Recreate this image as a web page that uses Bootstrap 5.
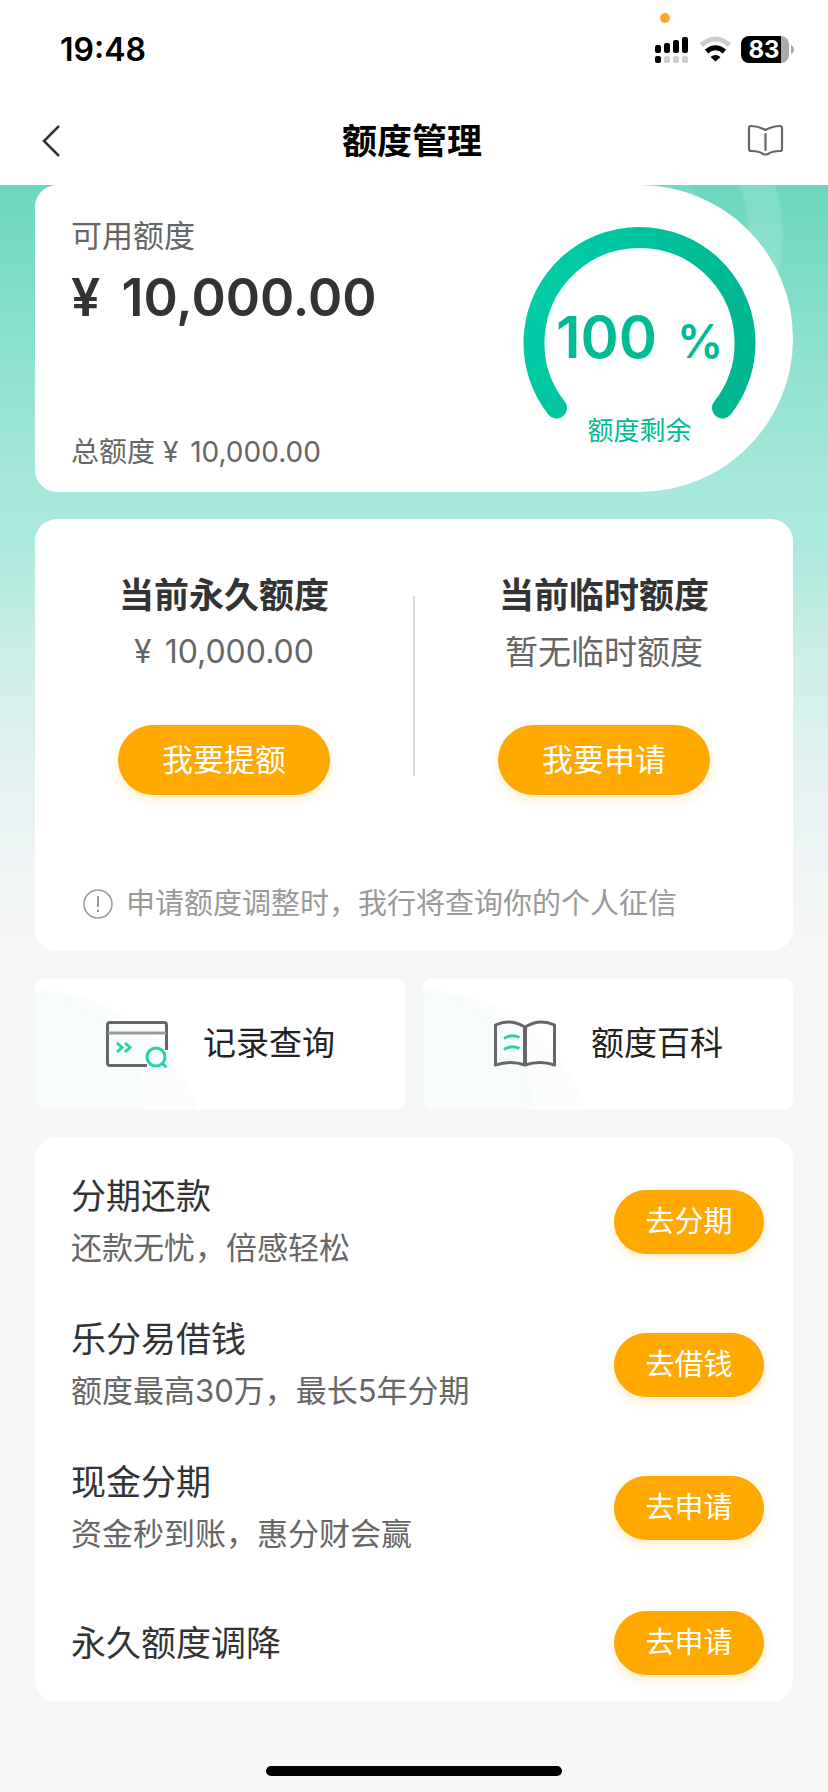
<!DOCTYPE html>
<html lang="zh-CN">
<head>
<meta charset="utf-8">
<meta name="viewport" content="width=device-width, initial-scale=1">
<title>额度管理</title>
<link href="https://cdn.jsdelivr.net/npm/bootstrap@5.3.0/dist/css/bootstrap.min.css" rel="stylesheet">
<style>
  :root { --ink: #333; --ink-soft: #666; --brand: #00bb94; --accent: #ffa900; }
  body { font-family: "Inter", "Noto Sans CJK SC", sans-serif; color: var(--ink); background: #f6f6f6; }
  .status-bar { height: 100px; padding: 0 34px 0 60px; }
  .clock { font-size: 32px; line-height: 40px; font-weight: 600; color: #000; }
  .mic-dot { position: absolute; top: 13px; right: 158px; width: 10px; height: 10px; background: #ffa52e; }
  .title-bar { height: 85px; padding: 0 44px 4px 40px; }
  .title-bar h1 { font-size: 35px; line-height: 52px; font-weight: 700; color: #000; }
  .title-bar .btn { line-height: 0; }
  .page-body {
    gap: 27px; padding: 0 35px 64px;
    background:
      radial-gradient(circle at calc(100% - 213px) 50px, rgba(255,255,255,.06) 90px, transparent 91px, transparent 133px, rgba(255,255,255,.13) 134px, rgba(255,255,255,.13) 167px, transparent 168px) 0 0 / 100% 300px no-repeat,
      linear-gradient(#6cd7bf 0, #a8e8dc 307px, #abe9dd 360px, #cceee6 465px, #e5f2f1 600px, #f0f4f5 690px, #f6f6f6 770px) 0 0 / 100% 770px no-repeat;
  }
  .panel { background: #fff; border-radius: 22px; }
  .quota { border-radius: 22px 154px 154px 22px; height: 307px; }
  .quota-info { padding: 31px 0 20px 36px; }
  .label-md { font-size: 31px; line-height: 40px; color: var(--ink-soft); }
  .label-sm { font-size: 28px; line-height: 40px; color: var(--ink-soft); }
  .quota-value { font-size: 52px; line-height: 66px; font-weight: 600; margin-top: 9px; }
  .gauge { width: 307px; color: var(--brand); padding-top: 112px; }
  .gauge svg { position: absolute; inset: 0; }
  .gauge-value { font-size: 58px; line-height: 80px; font-weight: 600; }
  .gauge-value small { font-size: 46px; margin-left: 20px; }
  .gauge-label { font-size: 26px; line-height: 40px; margin-top: 30px; }
  .limits { padding: 48px 0 25px; }
  .limits h2 { font-size: 35px; line-height: 56px; font-weight: 700; }
  .limit-value { font-size: 33px; line-height: 58px; color: var(--ink-soft); margin-bottom: 44px; }
  .limit-amount { font-size: 32px; }
  .divider { width: 2px; height: 180px; margin-top: 29px; background: #d8d8d8; }
  .btn-accent {
    --bs-btn-color: #fff; --bs-btn-bg: var(--accent); --bs-btn-border-color: var(--accent);
    --bs-btn-hover-color: #fff; --bs-btn-hover-bg: #f29f00; --bs-btn-hover-border-color: #f29f00;
    --bs-btn-padding-y: 0; --bs-btn-padding-x: 0;
    box-shadow: 0 5px 12px rgba(255,169,0,.2);
  }
  .btn-wide { width: 212px; height: 70px; font-size: 31px; }
  .btn-row { width: 150px; height: 64px; font-size: 29px; }
  .notice { padding-left: 48px; margin-top: 86px; gap: 13px; font-size: 29px; line-height: 45px; color: #999; }
  .tiles { gap: 18px; }
  .tile {
    flex: 1 1 0; height: 132px; gap: 34px; border-radius: 11px; font-size: 33px; color: #222; text-decoration: none;
    background:
      radial-gradient(circle at 0 122px, rgba(240,250,250,.3) 0, rgba(240,250,250,.4) 108px, transparent 109px),
      radial-gradient(circle at -5px 188px, #fafcfd 176px, #fff 178px);
  }
  .services { padding-top: 14px; }
  .service { padding: 19px 29px 20px 36px; }
  .service:last-child { padding: 31px 29px 27px 36px; }
  .service h3 { font-size: 35px; line-height: 52px; font-weight: 400; }
  .service p { font-size: 31px; line-height: 52px; color: var(--ink-soft); }
  .home-bar { width: 296px; height: 10px; background: #000; margin-bottom: 16px; }
</style>
</head>
<body>
<div class="d-flex flex-column min-vh-100">
  <header class="bg-white">
    <div class="status-bar position-relative d-flex align-items-center justify-content-between">
      <span class="clock">19:48</span>
      <span class="mic-dot rounded-circle"></span>
      <svg width="140" height="30" viewBox="654 35 140 30" aria-hidden="true">
        <g fill="#000">
          <rect x="655" y="45" width="6" height="8" rx="2"/><rect x="664" y="43" width="6" height="10" rx="2"/>
          <rect x="673" y="40" width="6" height="13" rx="2"/><rect x="682" y="37" width="6" height="16" rx="2"/>
          <rect x="655" y="56" width="6" height="7" rx="2"/>
        </g>
        <g fill="#ccc"><rect x="664" y="56" width="6" height="7" rx="2"/><rect x="673" y="56" width="6" height="7" rx="2"/><rect x="682" y="56" width="6" height="7" rx="2"/></g>
        <path d="M701.5 45Q715.500 33 729.500 45" fill="none" stroke="#ccc" stroke-width="5"/>
        <path d="M706.500 51.500Q715.500 44 724.500 51.500" fill="none" stroke="#000" stroke-width="5"/>
        <path d="M710.500 57Q715.500 53 720.500 57L715.500 61.500Z"/>
        <path d="M749 36h32v27h-32a8 8 0 0 1-8-8v-11a8 8 0 0 1 8-8Z"/>
        <path d="M781 36a8 8 0 0 1 8 8v11a8 8 0 0 1-8 8Z" fill="#aaa"/>
        <path d="M791 45q3 1 3 4.500t-3 4.500Z" fill="#aaa"/>
        <text x="764" y="58" text-anchor="middle" font-size="24" font-weight="700" fill="#fff">83</text>
      </svg>
    </div>
    <nav class="title-bar d-flex align-items-center justify-content-between" aria-label="页面">
      <button type="button" class="btn p-0 border-0" aria-label="返回">
        <svg width="40" height="36" viewBox="0 0 40 36" fill="none" stroke="#333" stroke-width="2.500"><path d="M19 3 4 18l15 15"/></svg>
      </button>
      <h1 class="m-0">额度管理</h1>
      <button type="button" class="btn p-0 border-0" aria-label="说明">
        <svg width="40" height="36" viewBox="744 123 40 36" fill="none" stroke="#666" stroke-width="2.200" stroke-linecap="round" stroke-linejoin="round"><path d="M751 126q7 0 14.500 4 7.500-4 14.500-4 2 0 2 2v21q0 2-2 2-8 0-12 3-2.500 1-5 0-4-3-12-3-2 0-2-2v-21q0-2 2-2ZM765.500 134v16"/></svg>
      </button>
    </nav>
  </header>

  <main class="page-body d-flex flex-column flex-grow-1">
    <section class="panel quota d-flex">
      <div class="quota-info d-flex flex-column flex-grow-1">
        <div class="label-md">可用额度</div>
        <div class="quota-value"><span class="me-2">¥</span> 10,000.00</div>
        <div class="label-sm mt-auto">总额度 <span class="me-1">¥</span> 10,000.00</div>
      </div>
      <div class="gauge position-relative text-center">
        <svg width="307" height="307" viewBox="0 0 307 307" aria-hidden="true">
          <defs><linearGradient id="arc" x1="0" y1="0" x2="1" y2="0.300"><stop offset="0" stop-color="#00cea8"/><stop offset="1" stop-color="#00b792"/></linearGradient></defs>
          <path d="M70.500 223A105.500 105.500 0 1 1 236.500 223" fill="none" stroke="url(#arc)" stroke-width="21" stroke-linecap="round"/>
        </svg>
        <div class="gauge-value position-relative">100<small class="fw-semibold">%</small></div>
        <div class="gauge-label position-relative">额度剩余</div>
      </div>
    </section>

    <section class="panel limits">
      <div class="d-flex text-center">
        <div class="flex-fill w-50">
          <h2 class="m-0">当前永久额度</h2>
          <div class="limit-value limit-amount"><span class="me-1">¥</span> 10,000.00</div>
          <button type="button" class="btn btn-accent btn-wide rounded-pill">我要提额</button>
        </div>
        <div class="divider flex-shrink-0"></div>
        <div class="flex-fill w-50">
          <h2 class="m-0">当前临时额度</h2>
          <div class="limit-value">暂无临时额度</div>
          <button type="button" class="btn btn-accent btn-wide rounded-pill">我要申请</button>
        </div>
      </div>
      <div class="notice d-flex align-items-center">
        <svg class="flex-shrink-0" width="30" height="30" viewBox="0 0 30 30" fill="none" stroke="#999" stroke-width="1.500" aria-hidden="true"><circle cx="15" cy="15" r="14"/><path d="M15 7v11M15 20.500v2.500" stroke-width="2"/></svg>
        <span>申请额度调整时，我行将查询你的个人征信</span>
      </div>
    </section>

    <div class="tiles d-flex">
      <a href="#records" class="tile d-flex align-items-center justify-content-center">
        <svg width="64" height="50" viewBox="0 0 64 50" fill="none" stroke="#666" stroke-width="3" aria-hidden="true">
          <path d="M61.500 31V6q0-2.500-2.500-2.500H5Q2.500 3.500 2.500 6v38q0 2.500 2.500 2.500h37" stroke-linejoin="round"/>
          <path d="M3 14h58" stroke="#999"/>
          <g stroke="#27d3aa" stroke-width="3"><path d="m12 24 5 4.500-5 4.500M20 24l5 4.500-5 4.500"/><circle cx="51" cy="38" r="9"/><path d="m57 44 4.500 4.500"/></g>
        </svg>
        <span>记录查询</span>
      </a>
      <a href="#wiki" class="tile d-flex align-items-center justify-content-center">
        <svg width="64" height="50" viewBox="0 0 64 50" fill="none" stroke="#666" stroke-width="3" stroke-linejoin="round" aria-hidden="true">
          <path d="M32 8Q17-1 2.500 6v40q15-5 29.500 0 15-5 29.500 0V6Q47-1 32 8Zv38"/>
          <path d="M32 8v38" stroke-width="4"/>
          <path d="M11 19.500q8-5 15.500-1M11 30.500q8-5 15.500-1" stroke="#27d3aa"/>
        </svg>
        <span>额度百科</span>
      </a>
    </div>

    <section class="panel services">
      <div class="service d-flex align-items-center justify-content-between">
        <div><h3 class="m-0">分期还款</h3><p class="m-0">还款无忧，倍感轻松</p></div>
        <button type="button" class="btn btn-accent btn-row rounded-pill flex-shrink-0">去分期</button>
      </div>
      <div class="service d-flex align-items-center justify-content-between">
        <div><h3 class="m-0">乐分易借钱</h3><p class="m-0">额度最高30万，最长5年分期</p></div>
        <button type="button" class="btn btn-accent btn-row rounded-pill flex-shrink-0">去借钱</button>
      </div>
      <div class="service d-flex align-items-center justify-content-between">
        <div><h3 class="m-0">现金分期</h3><p class="m-0">资金秒到账，惠分财会赢</p></div>
        <button type="button" class="btn btn-accent btn-row rounded-pill flex-shrink-0">去申请</button>
      </div>
      <div class="service d-flex align-items-center justify-content-between">
        <h3 class="m-0">永久额度调降</h3>
        <button type="button" class="btn btn-accent btn-row rounded-pill flex-shrink-0">去申请</button>
      </div>
    </section>
  </main>
  <div class="home-bar rounded-pill mx-auto"></div>
</div>
<script src="https://cdn.jsdelivr.net/npm/bootstrap@5.3.0/dist/js/bootstrap.bundle.min.js"></script>
</body>
</html>
